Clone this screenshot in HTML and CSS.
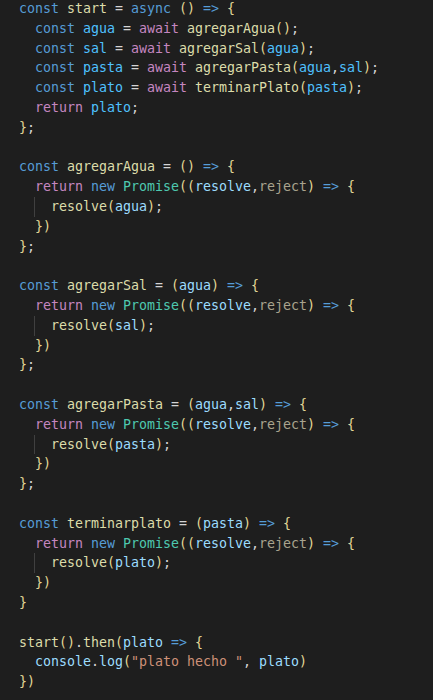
FILE: index.html
```html
<!DOCTYPE html>
<html lang="es">
<head>
<meta charset="utf-8">
<title>Código</title>
<link rel="stylesheet" href="styles.css">
</head>
<body>
<pre class="code"><div class="ln"><span class="k">const</span> <span class="f">start</span> = <span class="k">async</span> <span class="b">()</span> <span class="k">=&gt;</span> <span class="b">{</span></div><div class="ln">  <span class="k">const</span> <span class="v">agua</span> = <span class="c">await</span> <span class="f">agregarAgua</span><span class="b">()</span>;</div><div class="ln">  <span class="k">const</span> <span class="v">sal</span> = <span class="c">await</span> <span class="f">agregarSal</span><span class="b">(</span><span class="v">agua</span><span class="b">)</span>;</div><div class="ln">  <span class="k">const</span> <span class="v">pasta</span> = <span class="c">await</span> <span class="f">agregarPasta</span><span class="b">(</span><span class="v">agua</span>,<span class="v">sal</span><span class="b">)</span>;</div><div class="ln">  <span class="k">const</span> <span class="v">plato</span> = <span class="c">await</span> <span class="f">terminarPlato</span><span class="b">(</span><span class="v">pasta</span><span class="b">)</span>;</div><div class="ln">  <span class="c">return</span> <span class="v">plato</span>;</div><div class="ln"><span class="b">}</span>;</div><div class="ln"> </div><div class="ln"><span class="k">const</span> <span class="f">agregarAgua</span> = <span class="b">()</span> <span class="k">=&gt;</span> <span class="b">{</span></div><div class="ln">  <span class="c">return</span> <span class="k">new</span> <span class="t">Promise</span><span class="b">((</span><span class="p">resolve</span>,<span class="u">reject</span><span class="b">)</span> <span class="k">=&gt;</span> <span class="b">{</span></div><div class="ln">  <span class="g">  <span class="f">resolve</span><span class="b">(</span><span class="p">agua</span><span class="b">)</span>;</span></div><div class="ln">  <span class="b">})</span></div><div class="ln"><span class="b">}</span>;</div><div class="ln"> </div><div class="ln"><span class="k">const</span> <span class="f">agregarSal</span> = <span class="b">(</span><span class="p">agua</span><span class="b">)</span> <span class="k">=&gt;</span> <span class="b">{</span></div><div class="ln">  <span class="c">return</span> <span class="k">new</span> <span class="t">Promise</span><span class="b">((</span><span class="p">resolve</span>,<span class="u">reject</span><span class="b">)</span> <span class="k">=&gt;</span> <span class="b">{</span></div><div class="ln">  <span class="g">  <span class="f">resolve</span><span class="b">(</span><span class="p">sal</span><span class="b">)</span>;</span></div><div class="ln">  <span class="b">})</span></div><div class="ln"><span class="b">}</span>;</div><div class="ln"> </div><div class="ln"><span class="k">const</span> <span class="f">agregarPasta</span> = <span class="b">(</span><span class="p">agua</span>,<span class="p">sal</span><span class="b">)</span> <span class="k">=&gt;</span> <span class="b">{</span></div><div class="ln">  <span class="c">return</span> <span class="k">new</span> <span class="t">Promise</span><span class="b">((</span><span class="p">resolve</span>,<span class="u">reject</span><span class="b">)</span> <span class="k">=&gt;</span> <span class="b">{</span></div><div class="ln">  <span class="g">  <span class="f">resolve</span><span class="b">(</span><span class="p">pasta</span><span class="b">)</span>;</span></div><div class="ln">  <span class="b">})</span></div><div class="ln"><span class="b">}</span>;</div><div class="ln"> </div><div class="ln"><span class="k">const</span> <span class="f">terminarplato</span> = <span class="b">(</span><span class="p">pasta</span><span class="b">)</span> <span class="k">=&gt;</span> <span class="b">{</span></div><div class="ln">  <span class="c">return</span> <span class="k">new</span> <span class="t">Promise</span><span class="b">((</span><span class="p">resolve</span>,<span class="u">reject</span><span class="b">)</span> <span class="k">=&gt;</span> <span class="b">{</span></div><div class="ln">  <span class="g">  <span class="f">resolve</span><span class="b">(</span><span class="p">plato</span><span class="b">)</span>;</span></div><div class="ln">  <span class="b">})</span></div><div class="ln"><span class="b">}</span></div><div class="ln"> </div><div class="ln"><span class="f">start</span><span class="b">()</span>.<span class="f">then</span><span class="b">(</span><span class="p">plato</span> <span class="k">=&gt;</span> <span class="b">{</span></div><div class="ln">  <span class="p">console</span>.<span class="p">log</span><span class="b">(</span><span class="s">"plato hecho "</span>, <span class="p">plato</span><span class="b">)</span></div><div class="ln"><span class="b">})</span></div></pre>
</body>
</html>
```
FILE: styles.css
```css
html, body {
  margin: 0;
  padding: 0;
  background: #1e1e1e;
}
body {
  width: 433px;
  height: 700px;
  overflow: hidden;
}
.code {
  margin: 0;
  padding: 0 0 0 19px;
  font-family: "DejaVu Sans Mono", "Liberation Mono", monospace;
  font-size: 13.29px;
  line-height: 19.8px;
  color: #d4d4d4;
  position: relative;
  top: -1px;
}
.ln {
  height: 19.8px;
  white-space: pre;
}
.k { color: #569cd6; }
.c { color: #c586c0; }
.f { color: #dcdcaa; }
.v { color: #4fc1ff; }
.p { color: #9cdcfe; }
.t { color: #4ec9b0; }
.s { color: #ce9178; }
.b { color: #e2d896; }
.u { color: #a9a38e; }
.g {
  display: inline-block;
  margin-left: -1px;
  border-left: 1px solid #404040;
}
```
